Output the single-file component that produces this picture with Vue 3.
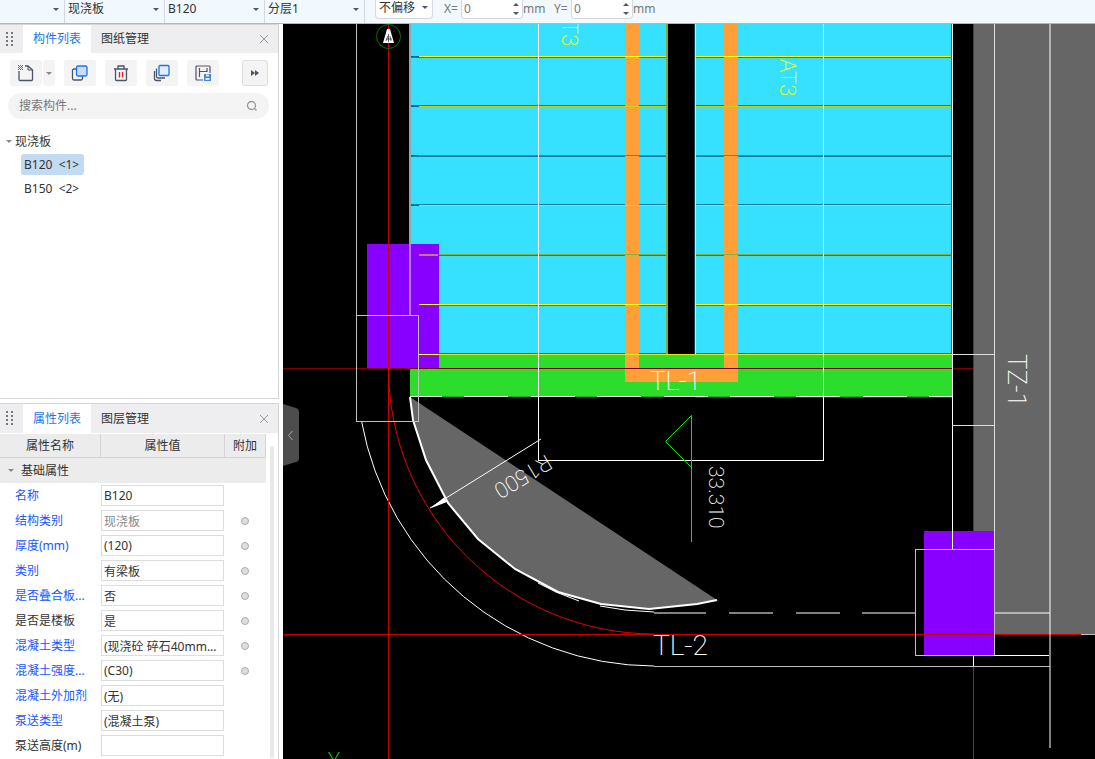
<script setup>
import { ref, reactive } from 'vue';

// 顶部工具栏
const filters = [
  { id: 'category', label: '构件类别', value: '' },
  { id: 'type', label: '构件类型', value: '现浇板' },
  { id: 'component', label: '构件名称', value: 'B120' },
  { id: 'layer', label: '分层', value: '分层1' }
];
const offsets = reactive([
  { axis: 'X', value: 0 },
  { axis: 'Y', value: 0 }
]);

// 构件列表
const components = ['B120  <1>', 'B150  <2>'];
const selected = ref(components[0]);
const keyword = ref('');

// 属性列表
const properties = reactive([
  { name: '名称', value: 'B120', blue: true },
  { name: '结构类别', value: '现浇板', blue: true, extra: true, disabled: true },
  { name: '厚度(mm)', value: '(120)', blue: true, extra: true },
  { name: '类别', value: '有梁板', blue: true, extra: true },
  { name: '是否叠合板...', value: '否', blue: true, extra: true },
  { name: '是否是楼板', value: '是', extra: true },
  { name: '混凝土类型', value: '(现浇砼 碎石40mm...', blue: true, extra: true },
  { name: '混凝土强度...', value: '(C30)', blue: true, extra: true },
  { name: '混凝土外加剂', value: '(无)', blue: true },
  { name: '泵送类型', value: '(混凝土泵)', blue: true },
  { name: '泵送高度(m)', value: '' }
]);

// 楼梯踏步线
const treads = [
  { y: 56, shade: 57, color: '#ffff00' },
  { y: 106, shade: 105, color: '#d0d010' },
  { y: 155, shade: 156, color: '#5f9050' },
  { y: 205, shade: 204, color: '#a0d8b0' },
  { y: 254, shade: 255, color: '#8aae3a' },
  { y: 304, shade: 305, color: '#ffff00' },
  { y: 354, shade: 353, color: '#e0e810' }
];
</script>

<template>
  <div class="app">
    <header class="topbar">
      <div v-for="f in filters" :key="f.id" class="filter">
        <select :id="f.id" :aria-label="f.label">
          <option>{{ f.value }}</option>
        </select>
        <i class="caret"></i>
      </div>
      <div class="offset-mode">
        <select aria-label="偏移方式">
          <option>不偏移</option>
        </select>
        <i class="caret"></i>
      </div>
      <div v-for="o in offsets" :key="o.axis" class="offset">
        <label :for="'offset-' + o.axis">{{ o.axis }}=</label>
        <div class="number">
          <input :id="'offset-' + o.axis" v-model="o.value" type="text">
          <span class="spin">
            <button type="button" aria-label="增加" @click="o.value++"><i class="caret up"></i></button>
            <button type="button" aria-label="减少" @click="o.value--"><i class="caret"></i></button>
          </span>
        </div>
        <span>mm</span>
      </div>
    </header>

    <div class="body">
      <aside class="side">
        <section class="panel list-panel">
          <div class="tabs">
            <svg class="grip" width="8" height="16" viewBox="0 0 8 16">
              <path d="M0 1h2M5 1h2M0 5h2M5 5h2M0 9h2M5 9h2M0 13h2M5 13h2" stroke="#777" stroke-width="2" />
            </svg>
            <button type="button" class="tab active">构件列表</button>
            <button type="button" class="tab">图纸管理</button>
            <button type="button" class="close" aria-label="关闭">
              <svg width="10" height="10" viewBox="0 0 10 10"><path d="M1 1l8 8M9 1l-8 8" stroke="#999" fill="none" /></svg>
            </button>
          </div>
          <div class="tools">
            <div class="split">
              <button type="button" class="tool" aria-label="新建">
                <svg width="18" height="18" viewBox="0 0 18 18" fill="none">
                  <path d="M2 7v8.500q0 1 1 1h11.500q1 0 1-1V6L11 2H8" stroke="#4c5468" stroke-width="1.300" />
                  <path d="M11 2v4h4.500" stroke="#4c5468" />
                  <path d="M1 1.500h1M3 1.500h1M5 1.500h1M2 2.500h1M4 2.500h1M1 3.500h1M3 3.500h1M5 3.500h1M2 4.500h1M4 4.500h1M1 5.500h1M3 5.500h1M5 5.500h1" stroke="#1677ff" />
                </svg>
              </button>
              <button type="button" class="tool more" aria-label="新建选项"><i class="caret grey"></i></button>
            </div>
            <button type="button" class="tool" aria-label="复制">
              <svg width="18" height="18" viewBox="0 0 18 18" fill="none">
                <path d="M5 5H3q-1.500 0-1.500 1.500v8Q1.500 16 3 16h7q1.500 0 1.500-1.500V12" stroke="#4c5468" stroke-width="1.300" />
                <rect x="5.500" y="2" width="10.500" height="10" rx="1.500" fill="#c9dcf5" stroke="#1a76e8" stroke-width="1.300" />
              </svg>
            </button>
            <button type="button" class="tool" aria-label="删除">
              <svg width="18" height="18" viewBox="0 0 18 18" fill="none">
                <path d="M2 5h14M6 4.500V2h6v2.500M3.500 5v10.500q0 1 1 1h9q1 0 1-1V5" stroke="#4c5468" stroke-width="1.300" />
                <path d="M7.500 8v5.500M10.500 8v5.500" stroke="#e02020" stroke-width="1.300" />
              </svg>
            </button>
            <button type="button" class="tool" aria-label="层间复制">
              <svg width="18" height="18" viewBox="0 0 18 18" fill="none">
                <path d="M3.500 4.500v8q0 1.500 1.500 1.500h7M1.500 7v7.500q0 2 2 2H8" stroke="#4c5468" stroke-width="1.300" />
                <rect x="6" y="1.500" width="10" height="10" rx="1" fill="#e4eefc" stroke="#1a76e8" stroke-width="1.300" />
              </svg>
            </button>
            <button type="button" class="tool" aria-label="存档">
              <svg width="18" height="18" viewBox="0 0 18 18" fill="none">
                <path d="M9 16H3q-1 0-1-1V3q0-1 1-1h12q1 0 1 1v6" stroke="#4c5468" stroke-width="1.200" />
                <path d="M5.500 4v9M13 4v4M5.500 7.500H13" stroke="#4c5468" stroke-width="1.200" />
                <rect x="10" y="10" width="7" height="7" fill="#4a86d8" />
                <path d="M12 10.500h3v2h-3zM11.500 14h4v2h-4z" fill="#dce9fa" />
              </svg>
            </button>
            <button type="button" class="tool expand" aria-label="更多">
              <svg width="8" height="6" viewBox="0 0 8 6"><path d="M0 0l4 3-4 3zM4 0l4 3-4 3z" fill="#4c5468" /></svg>
            </button>
          </div>
          <div class="search">
            <input v-model="keyword" type="text" placeholder="搜索构件..." aria-label="搜索构件">
            <svg width="12" height="12" viewBox="0 0 12 12" fill="none" stroke="#999" stroke-width="1.300">
              <circle cx="5.500" cy="5.500" r="4" /><path d="M8.500 8.500l2 2" />
            </svg>
          </div>
          <div class="tree">
            <div class="root"><i class="caret grey"></i>现浇板</div>
            <button
              v-for="c in components"
              :key="c"
              type="button"
              class="node"
              :class="{ selected: c === selected }"
              @click="selected = c"
            >{{ c }}</button>
          </div>
        </section>

        <section class="panel prop-panel">
          <div class="tabs">
            <svg class="grip" width="8" height="16" viewBox="0 0 8 16">
              <path d="M0 1h2M5 1h2M0 5h2M5 5h2M0 9h2M5 9h2M0 13h2M5 13h2" stroke="#777" stroke-width="2" />
            </svg>
            <button type="button" class="tab active">属性列表</button>
            <button type="button" class="tab">图层管理</button>
            <button type="button" class="close" aria-label="关闭">
              <svg width="10" height="10" viewBox="0 0 10 10"><path d="M1 1l8 8M9 1l-8 8" stroke="#999" fill="none" /></svg>
            </button>
          </div>
          <div class="prop-body">
            <table>
              <colgroup><col class="c-name"><col class="c-value"><col class="c-extra"></colgroup>
              <thead>
                <tr><th>属性名称</th><th>属性值</th><th>附加</th></tr>
              </thead>
              <tbody>
                <tr class="group"><td colspan="3"><i class="caret grey"></i>基础属性</td></tr>
                <tr v-for="(p, i) in properties" :key="p.name">
                  <td><label :for="'prop-' + i" :class="{ blue: p.blue }">{{ p.name }}</label></td>
                  <td><input :id="'prop-' + i" v-model="p.value" class="value" type="text" :disabled="p.disabled"></td>
                  <td><input v-if="p.extra" class="dot" type="checkbox" :aria-label="p.name + ' 附加'"></td>
                </tr>
              </tbody>
            </table>
            <div class="scrollbar"></div>
          </div>
        </section>
      </aside>

      <main class="canvas">
        <svg class="drawing" viewBox="283 24 812 735" preserveAspectRatio="xMinYMin slice">
          <!-- 板、墙填充 -->
          <g shape-rendering="crispEdges">
            <rect x="973" y="24" width="122" height="610" fill="#666" />
            <rect x="410" y="24" width="257" height="331" fill="#36e0ff" />
            <rect x="695" y="24" width="257" height="331" fill="#36e0ff" />
            <rect x="410" y="355" width="542" height="41" fill="#2cdd2c" />
            <path d="M625 24h14v344h85V24h14v358H625z" fill="#ff9f37" />
            <rect x="409" y="24" width="2" height="291" fill="#8aaab4" />
          </g>

          <!-- 踏步 -->
          <g shape-rendering="crispEdges">
            <template v-for="t in treads" :key="t.y">
              <path :d="`M411 ${t.shade}.5H625M639 ${t.shade}.5H667M695 ${t.shade}.5H724M738 ${t.shade}.5H952`" stroke="#148098" />
              <path :d="`M411 ${t.y}.5H419`" stroke="#006080" />
              <path :d="`M419 ${t.y}.5H667M695 ${t.y}.5H952`" :stroke="t.color" />
            </template>
            <path d="M667 354.500H695" stroke="#e0e810" />
            <rect x="666" y="24" width="2" height="330" fill="#82ab38" />
            <path d="M694.500 24V354" stroke="#104850" />
            <path d="M695.500 24V354" stroke="#ffff00" />
            <path d="M951.500 24V354" stroke="#148098" />
            <path d="M695 397.500H952" stroke="#064450" />
            <path d="M410 396.500H952" stroke="#1fae1f" />
            <path d="M398 396.500H952" stroke="#e8ffe8" stroke-dasharray="44 22.400" clip-path="url(#beam)" />
          </g>
          <clipPath id="beam"><rect x="410" y="390" width="542" height="10" /></clipPath>

          <!-- 柱 -->
          <g shape-rendering="crispEdges" fill="#8800ff">
            <rect x="367" y="244" width="72" height="124" />
            <rect x="924" y="531" width="71" height="125" />
          </g>
          <path d="M419 255H438" stroke="#c08070" stroke-width="2" />
          <path d="M419 304.500H439M419 354.500H439" stroke="#ffff00" shape-rendering="crispEdges" />
          <rect x="409" y="244" width="2" height="71" fill="#b878ff" />

          <!-- 弧形板 -->
          <path
            d="M410 397L717 600L697 604L649 609L601 604L558 592L515 569L478 539L448 503L426 460L413 420z"
            fill="#666"
          />
          <path
            d="M410 397L413 420L426 460L448 503L478 539L515 569L558 592L601 604L649 609L697 604L717 600"
            fill="none" stroke="#fff" stroke-width="2"
          />
          <path d="M538 583L556 592L579 601M600 606L625 610L654 612" fill="none" stroke="#fff" />
          <path d="M361.500 421A298 298 0 0 0 654 666" fill="none" stroke="#fff" />

          <!-- 轴线 -->
          <g fill="none" stroke="#c80000" shape-rendering="crispEdges">
            <path d="M388.500 24V759M283 634.500H1081" />
            <path d="M283 368.500H973" stroke="#800000" />
            <path d="M973.500 24V759" stroke="#e00000" />
          </g>
          <path d="M388.500 368A266 266 0 0 0 654 634" fill="none" stroke="#e80000" />

          <!-- 轮廓线 -->
          <g fill="none" stroke="#c0c0c0" shape-rendering="crispEdges">
            <path d="M356.500 24V421.500H418.500V315.500H356.500" />
            <path d="M538.500 24V460.500H823.500V24" stroke="#fff" />
            <path d="M952.500 24V549" stroke="#fff" />
            <path d="M994.500 24V655M952 354.500H994M952 425.500H994" stroke="#ddd" />
            <path d="M915.500 549.500H994.500V655.500H915.500z" />
            <path d="M994 655.500H1049M973.500 656V666" stroke="#fff" />
            <path d="M654 666.500H1050M1081 634.500H1095" />
            <path d="M1050 24V748" stroke="#fff" stroke-opacity="0.500" stroke-width="2" />
            <path
              d="M654 613H706M729 613H773M796 613H840M862 613H915M995 613H1050"
              stroke="#fff" stroke-opacity="0.500" stroke-width="2"
            />
          </g>

          <!-- 标高与标注 -->
          <path d="M691.500 542V415.500L665.500 441.500L691.500 467.500" fill="none" stroke="#00e800" />
          <path d="M541 439L430 508" stroke="#fff" />
          <path d="M430 508.500L444 497.500L447 502z" fill="#fff" />
          <circle cx="388.500" cy="36.500" r="12" fill="none" stroke="#007800" />
          <path d="M387 29h3l4 14h-11z" fill="#fff" />
          <path d="M388.500 34v8M386 39h6M386 41l2-5M391 41l-1-5" stroke="#222" stroke-width="0.700" />

          <g class="cad">
            <text x="650" y="390" font-size="26">TL-1</text>
            <text x="653" y="655" font-size="28">TL-2</text>
            <text transform="translate(1008 354) rotate(90)" font-size="26">TZ-1</text>
            <text transform="translate(709 466) rotate(90)" font-size="21">33.310</text>
            <text transform="translate(546 454) rotate(149)" font-size="22">R1500</text>
            <text transform="translate(562 9) rotate(90)" font-size="22" class="yellow">AT3</text>
            <text transform="translate(780 59) rotate(90)" font-size="22" class="yellow">AT3</text>
            <text x="328" y="767" font-size="20" class="green">Y</text>
          </g>
        </svg>
        <button type="button" class="collapse" aria-label="收起面板">
          <svg width="16" height="62" viewBox="0 0 16 62">
            <path d="M0 0L13 4q3 1 3 4v46q0 3-3 4L0 62z" fill="#4d4d4d" />
            <path d="M9.500 27l-4 4.500 4 4.500" fill="none" stroke="#aaa" />
          </svg>
        </button>
      </main>
    </div>
  </div>
</template>

<style>
body {
  overflow: hidden;
}
</style>

<style scoped>
.app {
  height: 100vh;
  display: flex;
  flex-direction: column;
  background: #fff;
  color: #333;
  font: 12px/18px "Noto Sans", "Noto Sans CJK SC", sans-serif;
}

button,
input,
select {
  font: inherit;
  color: inherit;
  margin: 0;
  padding: 0;
  border: 0;
  background: none;
  outline: none;
  box-sizing: border-box;
}

select {
  appearance: none;
  width: 100%;
}

svg {
  display: block;
}

.caret {
  flex: none;
  border: 3px solid transparent;
  border-top-color: #4c5468;
  border-bottom-width: 0;
}

.caret.up {
  border-top-width: 0;
  border-bottom: 3px solid #4c5468;
}

.caret.grey {
  border-top-color: #888;
}

.topbar {
  flex: none;
  height: 24px;
  box-sizing: border-box;
  display: flex;
  background: #f1f9fe;
  border-bottom: 1px solid #8fc0ee;
}

.filter {
  width: 100px;
  box-sizing: border-box;
  display: flex;
  align-items: center;
  padding: 0 5px 5px 3px;
  border-right: 1px solid #d5d8dc;
}

.filter:first-child {
  width: 65px;
}

.filter select,
.offset-mode select {
  flex: 1;
  min-width: 0;
}

.offset-mode {
  width: 58px;
  height: 19px;
  box-sizing: border-box;
  display: flex;
  align-items: center;
  margin: 0 11px 0 10px;
  padding: 0 4px 3px 3px;
  background: #fff;
  border: 1px solid #d5d8dc;
  border-top: 0;
  border-radius: 0 0 4px 4px;
}

.offset {
  width: 110px;
  height: 18px;
  display: flex;
  color: #777;
}

.offset label {
  width: 17px;
}

.number {
  width: 62px;
  height: 19px;
  box-sizing: border-box;
  display: flex;
  background: #fff;
  border: 1px solid #d5d8dc;
  border-top: 0;
  border-radius: 0 0 4px 4px;
}

.number input {
  flex: 1;
  min-width: 0;
  padding-left: 2px;
}

.spin {
  width: 12px;
  display: flex;
  flex-direction: column;
}

.spin button {
  height: 9px;
  display: flex;
  align-items: center;
  justify-content: center;
}

.body {
  flex: 1;
  min-height: 0;
  display: flex;
}

.side {
  width: 279px;
  flex: none;
  display: flex;
  flex-direction: column;
  gap: 4px;
  margin-right: 4px;
}

.panel {
  box-sizing: border-box;
  border: 1px solid #d5d5d5;
  border-left: 0;
}

.list-panel {
  flex: none;
  height: 375px;
}

.prop-panel {
  flex: 1;
  min-height: 0;
  border-bottom: 0;
  overflow: hidden;
}

.tabs {
  display: flex;
  height: 28px;
  background: #eeeef0;
}

.grip {
  margin: 7px 9px 0 6px;
}

.tab {
  width: 68px;
}

.tab.active {
  background: #fff;
  color: #1677e8;
}

.close {
  margin-left: auto;
  width: 28px;
  display: flex;
  align-items: center;
  justify-content: center;
}

.tools {
  display: flex;
  gap: 9px;
  padding: 7px 10px;
}

.split {
  display: flex;
  gap: 1px;
}

.tool {
  width: 32px;
  height: 26px;
  display: flex;
  align-items: center;
  justify-content: center;
  background: #f4f4f4;
  border-radius: 3px;
}

.tool.more {
  width: 12px;
}

.tool.expand {
  width: 26px;
  margin-left: auto;
  border: 1px solid #ddd;
}

.search {
  display: flex;
  align-items: center;
  height: 26px;
  margin: 0 9px 0 8px;
  padding: 0 11px;
  background: #f4f4f4;
  border-radius: 13px;
}

.search input {
  flex: 1;
}

.search input::placeholder {
  color: #777;
  opacity: 1;
}

.tree {
  display: flex;
  flex-direction: column;
  align-items: flex-start;
  gap: 3px;
  padding: 13px 0 0 6px;
}

.root {
  display: flex;
  align-items: center;
  gap: 3px;
  height: 19px;
}

.node {
  height: 21px;
  margin-left: 15px;
  padding: 0 5px 0 3px;
  border-radius: 3px;
  white-space: pre;
}

.node.selected {
  background: #c2daf2;
}

.prop-body {
  display: flex;
  gap: 4px;
}

.prop-panel .tabs {
  height: 29px;
  margin-bottom: 1px;
}

table {
  width: 266px;
  table-layout: fixed;
  border-collapse: separate;
  border-spacing: 0;
}

.c-name {
  width: 101px;
}

.c-value {
  width: 124px;
}

th {
  height: 24px;
  box-sizing: border-box;
  padding: 1px 0 0;
  font-weight: 400;
  background: #ececec;
  border-right: 1px solid #d5d5d5;
  border-bottom: 1px solid #d5d5d5;
}

td {
  height: 25px;
  padding: 0;
  box-sizing: border-box;
}

td label {
  padding-left: 15px;
  white-space: nowrap;
}

.blue {
  color: #1657ff;
}

.group td {
  background: #ececec;
}

.group .caret {
  display: inline-block;
  margin: 0 7px 3px 8px;
}

.value {
  display: block;
  width: 123px;
  height: 21px;
  padding: 0 2px;
  border: 1px solid #ddd;
  background: #fff;
}

.value:disabled {
  color: #888;
}

.dot {
  appearance: none;
  display: block;
  width: 8px;
  height: 8px;
  margin: 0 0 0 16px;
  background: #dcdee0;
  border: 1px solid #aaa;
  border-radius: 50%;
}

.dot:checked {
  background: #1677e8;
}

.scrollbar {
  width: 4px;
  margin-top: 12px;
  background: #e8e8e8;
  border-radius: 2px 2px 0 0;
}

.canvas {
  position: relative;
  flex: 1;
  min-width: 0;
  background: #000;
}

.drawing {
  width: 100%;
  height: 100%;
}

.collapse {
  position: absolute;
  left: 0;
  top: 380px;
}

.cad {
  font-family: "Roboto", sans-serif;
  font-weight: 200;
  fill: #fff;
}

.cad .yellow {
  fill: #ffff00;
}

.cad .green {
  fill: #00ff00;
}
</style>
